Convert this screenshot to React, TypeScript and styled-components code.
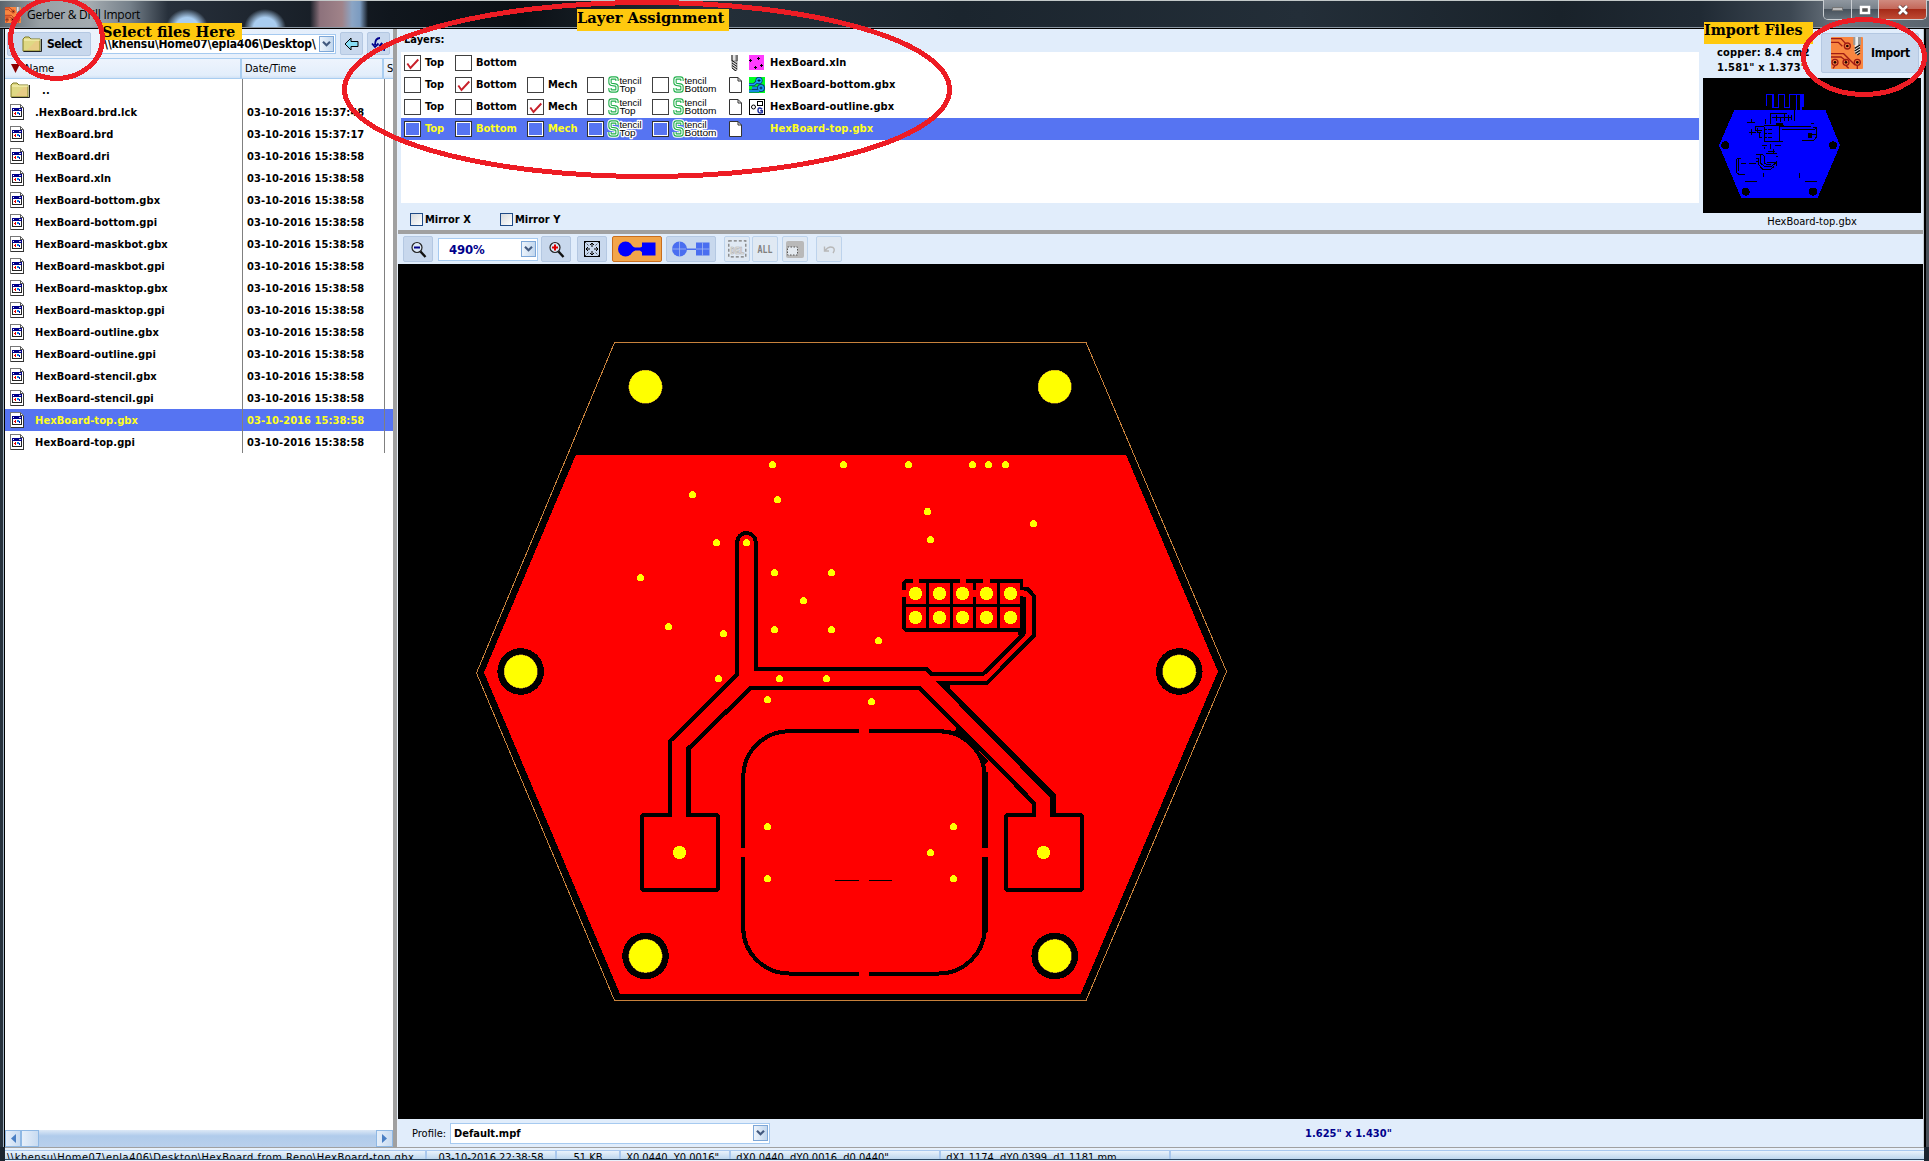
import React from 'react';
import styled, { createGlobalStyle, css } from 'styled-components';

const Global = createGlobalStyle`
  * { box-sizing: border-box; }
  html, body { margin: 0; padding: 0; background: #000; overflow: hidden; }
  svg { display: block; flex: none; }
`;

const ui = css`
  font-family: "DejaVu Sans Condensed", "DejaVu Sans", Tahoma, sans-serif;
  font-stretch: condensed;
  font-size: 11px;
  white-space: nowrap;
`;

/* ---------- window frame ---------- */

const Screen = styled.div`
  ${ui}
  position: relative;
  width: 1929px;
  height: 1161px;
  overflow: hidden;
  display: flex;
  flex-direction: column;
  background: #1b2530;
  color: #000;
`;

const TitleBar = styled.header`
  height: 29px;
  flex: none;
  display: flex;
  align-items: flex-start;
  padding: 6px 2px 0 5px;
  gap: 6px;
  border-top: 1px solid #c3c9c9;
  border-bottom: 1px solid #000;
  box-shadow: inset 0 -1px 0 #8b97a3;
  background:
    radial-gradient(ellipse 21px 19px at 187px 27px, #a9cdf0 55%, transparent 100%),
    radial-gradient(ellipse 21px 19px at 265px 27px, #a9cdf0 55%, transparent 100%),
    linear-gradient(90deg, transparent 310px, #8d727c 320px, #a08389 342px, #8ba5c5 352px, #7b9bc0 360px, transparent 368px),
    linear-gradient(90deg, #5b646c 0, #98a0a5 40px, #a4abb0 90px, #75808a 130px, #27303b 168px, #10161d 390px, #0b1015 520px, #242f39 700px, #1b252e 960px, #232e38 1300px, #19222a 1560px, #202a34 1700px, #3c4752 1790px, #6c7680 1840px, #5a646e 1929px);
`;

const TitleText = styled.span`
  font-family: "Open Sans", "Noto Sans", sans-serif;
  font-stretch: normal;
  font-size: 12px;
  line-height: 15px;
  letter-spacing: -0.25px;
  flex: 1;
`;

const WindowButtons = styled.div`
  display: flex;
  height: 20px;
  width: 104px;
  margin-top: -7px;
  border: 1px solid #c9ced2;
  border-top: 0;
  border-radius: 0 0 5px 5px;
  overflow: hidden;
`;

const WinBtn = styled.div<{ $w: number; $close?: boolean }>`
  width: ${p => p.$w}px;
  display: flex;
  align-items: center;
  justify-content: center;
  border-right: 1px solid #c9ced2;
  background: ${p => p.$close
    ? 'linear-gradient(#d08b80 0, #c4685a 45%, #a52a18 50%, #bf4a33 100%)'
    : 'linear-gradient(#9098a0 0, #79828b 45%, #48525c 50%, #65707a 100%)'};
  &:last-child { border-right: 0; }
`;

const Frame = styled.div`
  flex: none;
  height: 1118px;
  display: flex;
  border-left: 3px solid #27323d;
  border-right: 3px solid #4a525a;
`;

const Client = styled.div`
  flex: 1;
  min-width: 0;
  display: flex;
  border-left: 1px solid #9fb0c0;
  border-right: 2px solid #000;
  box-shadow: inset 1px 0 0 #000, inset -1px 0 0 #c3cad2;
  padding: 0 1px;
`;

/* ---------- file browser ---------- */

const FilePanel = styled.aside`
  width: 388px;
  display: flex;
  flex-direction: column;
  background: #fff;
`;

const PathBar = styled.div`
  height: 29px;
  display: flex;
  align-items: center;
  gap: 4px;
  padding: 0 4px 0 2px;
  background: linear-gradient(90deg, #eef4fc, #e2edfb);
`;

const PushButton = styled.button<{ $w: number; $h: number }>`
  ${ui}
  width: ${p => p.$w}px;
  height: ${p => p.$h}px;
  display: flex;
  align-items: center;
  justify-content: center;
  flex: none;
  padding: 0;
  border: 1px solid #b4c8e2;
  border-radius: 2px;
  background: #c8d8ed;
  font-weight: bold;
`;

const SelectButton = styled(PushButton)`
  justify-content: flex-start;
  gap: 5px;
  padding-left: 14px;
  font-size: 12px;
  letter-spacing: -0.5px;
`;

const Combo = styled.div<{ $w: number; $h: number; $color?: string; $pad?: number }>`
  width: ${p => p.$w}px;
  height: ${p => p.$h}px;
  flex: none;
  display: flex;
  align-items: center;
  justify-content: space-between;
  padding: 0 1px 0 ${p => p.$pad ?? 3}px;
  border: 1px solid #a6caf0;
  background: #fff;
  color: ${p => p.$color ?? '#000'};
  font-weight: bold;
`;

const PathCombo = styled(Combo)`
  margin-left: 7px;
  font-size: 12px;
  letter-spacing: -0.15px;
`;

const ZoomText = styled.span`
  font-size: 13px;
  letter-spacing: -0.1px;
`;

const ArrowBox = styled.span`
  width: 15px;
  height: 16px;
  flex: none;
  display: flex;
  align-items: center;
  justify-content: center;
  border: 1px solid #7da7d8;
  background: linear-gradient(90deg, #edf4fc, #c2d7ee);
`;

const ListHeader = styled.div`
  height: 21px;
  display: grid;
  grid-template-columns: 237px 142px 1fr;
  border-top: 1px solid #a9cdf0;
  border-bottom: 1px solid #a9cdf0;
  background: linear-gradient(#eef4fd 0, #e3eefb 85%, #d2e2f5 100%);
`;

const HeaderCell = styled.div<{ $pad: number }>`
  display: flex;
  align-items: center;
  gap: 5px;
  padding-left: ${p => p.$pad}px;
  border-right: 2px solid #a9cdf0;
  overflow: hidden;
  font-size: 11px;
  &:last-child { border-right: 0; }
`;

const FileRow = styled.div<{ $sel?: boolean }>`
  height: 22px;
  flex: none;
  display: grid;
  grid-template-columns: 238px 142px 1fr;
  font-weight: bold;
  background: ${p => (p.$sel ? '#5674f2' : '#fff')};
  color: ${p => (p.$sel ? '#ffff1e' : '#000')};
`;

const NameCell = styled.div`
  display: flex;
  align-items: center;
  padding-left: 5px;
  border-right: 1px solid #808080;
  letter-spacing: 0.1px;
`;

const IconSlot = styled.span`
  width: 25px;
  flex: none;
`;

const DateCell = styled.div`
  display: flex;
  align-items: center;
  padding-left: 4px;
  border-right: 1px solid #808080;
  letter-spacing: 0.07px;
`;

const Filler = styled.div`
  flex: 1;
`;

const HScroll = styled.div`
  height: 17px;
  display: flex;
  background: linear-gradient(#dce8f6, #b0cbeb 35%, #b9d0ec);
`;

const ScrollPart = styled.div<{ $w: number }>`
  width: ${p => p.$w}px;
  display: flex;
  align-items: center;
  justify-content: center;
  border: 1px solid #8fb8e4;
  background: linear-gradient(90deg, #e6effa, #c8dbf1);
`;

const SplitterV = styled.div`
  width: 5px;
  background: #a0a0a0;
  border-right: 1px solid #e8eff8;
`;

/* ---------- right side ---------- */

const MainPanel = styled.main`
  flex: 1;
  min-width: 0;
  display: flex;
  flex-direction: column;
  background: #e1edfb;
`;

const TopSection = styled.section`
  height: 201px;
  flex: none;
  display: flex;
`;

const LayersArea = styled.div`
  width: 1301px;
  flex: none;
  padding-left: 3px;
  display: flex;
  flex-direction: column;
`;

const LayersTitle = styled.div`
  height: 23px;
  padding: 4px 0 0 3px;
  font-weight: bold;
  line-height: 14px;
`;

const LayerList = styled.div`
  height: 151px;
  background: #fff;
`;

const LayerRow = styled.div<{ $sel?: boolean }>`
  height: 22px;
  display: grid;
  grid-template-columns: 51px 72px 60px 65px 77px 20px 21px 1fr;
  align-items: center;
  padding: 0 0 1px 3px;
  font-weight: bold;
  background: ${p => (p.$sel ? '#5674f2' : '#fff')};
  color: ${p => (p.$sel ? '#ffff1e' : '#000')};
`;

const LayerCell = styled.div`
  display: flex;
  align-items: center;
  gap: 4px;
  line-height: 14px;
`;

const LayerName = styled(LayerCell)`
  letter-spacing: 0.12px;
`;

const Check = styled.span<{ $sel?: boolean }>`
  width: 17px;
  height: 16px;
  flex: none;
  border: 1px solid ${p => (p.$sel ? '#303030' : '#404040')};
  box-shadow: ${p => (p.$sel ? 'inset 0 0 0 1px #fff' : 'none')};
  background: ${p => (p.$sel ? '#5674f2' : '#fff')};
`;

const MirrorRow = styled.div`
  flex: 1;
  display: flex;
  gap: 34px;
  align-items: center;
  padding: 5px 0 0 9px;
  font-weight: bold;
`;

const MirrorItem = styled.label`
  display: flex;
  align-items: center;
  gap: 2px;
  width: 56px;
`;

const MirrorBox = styled.span`
  width: 13px;
  height: 13px;
  flex: none;
  border: 1px solid #1f4a86;
  background: linear-gradient(135deg, #d5d9dd, #fff);
`;

const ImportArea = styled.div`
  flex: 1;
  padding: 4px 2px 0 4px;
`;

const ImportHead = styled.div`
  height: 45px;
  width: 218px;
  display: flex;
  justify-content: space-between;
`;

const BoardInfo = styled.div`
  width: 102px;
  padding: 12px 0 0 14px;
  font-weight: bold;
  line-height: 15px;
  letter-spacing: 0.2px;
`;

const ImportButton = styled(PushButton)`
  justify-content: flex-start;
  gap: 8px;
  padding-left: 9px;
  margin-right: 2px;
  font-size: 12px;
  letter-spacing: -0.35px;
`;

const PreviewCaption = styled.div`
  width: 218px;
  text-align: center;
  line-height: 17px;
`;

const SplitterH = styled.div`
  height: 4px;
  flex: none;
  background: #a0a0a0;
`;

const ToolBar = styled.div`
  height: 30px;
  flex: none;
  display: flex;
  align-items: center;
  padding-left: 5px;
`;

const Tool = styled.button<{ $w: number; $ml?: number; $on?: boolean; $off?: boolean }>`
  width: ${p => p.$w}px;
  height: 26px;
  flex: none;
  display: flex;
  align-items: center;
  justify-content: center;
  margin-left: ${p => p.$ml ?? 0}px;
  padding: 0;
  border-radius: 2px;
  border: 1px solid ${p => (p.$on ? '#c86e1e' : p.$off ? '#bdd3ec' : '#b4c8e2')};
  background: ${p => (p.$on ? '#f2a54a' : p.$off ? '#e0e9f3' : '#c8d8ed')};
`;

const ZoomCombo = styled(Combo)`
  margin-left: 5px;
`;

const Canvas = styled.div`
  height: 855px;
  flex: none;
  background: #000;
`;

const ProfileBar = styled.div`
  height: 28px;
  flex: none;
  display: flex;
  align-items: center;
  padding-left: 14px;
  gap: 5px;
`;

const ProfileLabel = styled.span`
  width: 33px;
`;

const BoardSize = styled.span`
  margin-left: 530px;
  color: #00008b;
  font-weight: bold;
  letter-spacing: 0.05px;
`;

const StatusBar = styled.footer`
  height: 14px;
  flex: none;
  display: flex;
  border-top: 1px solid #a0a0a0;
  margin: 0 5px;
  background: #e8f1fb;
  flex-direction: column;
`;

const StatusCells = styled.div`
  display: flex;
  margin-top: 2px;
  height: 10px;
  border-top: 1px solid #a9c8ee;
  border-bottom: 1px solid #2c4763;
  background: linear-gradient(#eaf3fc, #bed7ee);
  overflow: hidden;
`;

const StatusCell = styled.div<{ $w: number; $center?: boolean; $ls?: number }>`
  width: ${p => p.$w}px;
  flex: none;
  padding: 0 3px 0 ${p => (p.$center ? 3 : 2)}px;
  text-align: ${p => (p.$center ? 'center' : 'left')};
  border-right: 2px solid #a9c8ee;
  line-height: 14px;
  letter-spacing: ${p => p.$ls ?? 0}px;
`;

/* ---------- annotations over the window ---------- */

const Marks = styled.svg`
  position: absolute;
  left: 0;
  top: 0;
  pointer-events: none;
`;

const Note = styled.div<{ $x: number; $y: number; $w: number; $h: number; $size: number }>`
  position: absolute;
  left: ${p => p.$x}px;
  top: ${p => p.$y}px;
  width: ${p => p.$w}px;
  height: ${p => p.$h}px;
  background: #ffc90e;
  font-family: "DejaVu Serif", serif;
  font-stretch: normal;
  font-weight: bold;
  font-size: ${p => p.$size}px;
  line-height: 17px;
`;

/* ---------- icons ---------- */

const PcbIcon = ({ size }: { size: number }) => (
  <svg width={size} height={size} viewBox="0 0 96 96">
    <rect width="96" height="96" rx="3" fill="#f98640" />
    <g fill="none" stroke="#a01c14" strokeWidth="4">
      <path d="M0 5H30L44 20M0 16H22L34 28M0 50H38L72 84M0 60H30L46 72" />
      <circle cx="49" cy="27" r="9" /><circle cx="12" cy="76" r="9" />
      <circle cx="45" cy="76" r="9" /><circle cx="79" cy="76" r="9" />
      <path d="M12 86L6 94M45 86L53 94M79 86V96" />
    </g>
    <g fill="#200"><circle cx="49" cy="27" r="4" /><circle cx="12" cy="76" r="4" /><circle cx="45" cy="76" r="4" /><circle cx="79" cy="76" r="4" /></g>
    <rect x="67" width="23" height="24" fill="#999" /><rect x="73" width="8" height="24" fill="#eee" />
    <path d="M71 24H87V48L79 54L71 46Z" fill="#eee" />
    <path d="M71 34L87 24M71 42L87 32M73 49L87 40M79 54L87 48" stroke="#111" strokeWidth="4" />
  </svg>
);

const FolderIcon = () => (
  <svg width="20" height="16" viewBox="0 0 20 16">
    <path d="M1 3L3 1H7L9 3H18V15H1Z" fill="#dfd884" stroke="#7e7b22" />
    <path d="M2 4H18" stroke="#fbf7c0" />
    <path d="M6 13L14 5H17V14H5Z" fill="#e8c986" opacity=".8" />
    <path d="M1.5 15.5H19.5V3" fill="none" stroke="#222" />
  </svg>
);

const FileIcon = () => (
  <svg width="14" height="16" viewBox="0 0 14 16" shapeRendering="crispEdges">
    <path d="M.5.5H10.5L13.5 3.5V15.5H.5Z" fill="#fff" stroke="#777" />
    <path d="M10.5 1V3.5H13" fill="none" stroke="#555" />
    <path d="M13.5 4V15.5H1" fill="none" stroke="#333" />
    <rect x="2.5" y="4.5" width="9" height="8" fill="#fff" stroke="#222" />
    <rect x="2" y="4" width="10" height="3" fill="#00008b" />
    <rect x="3" y="5" width="1" height="1" fill="#fff" /><rect x="9" y="5" width="2" height="1" fill="#ccc" />
    <rect x="4" y="9" width="1" height="1" fill="#e00" /><rect x="5" y="8" width="1" height="3" fill="#e00" />
    <rect x="7" y="8" width="2" height="2" fill="#0080e0" /><rect x="9" y="9" width="1" height="2" fill="#00a" />
  </svg>
);

const Chevron = () => (
  <svg width="9" height="6" viewBox="0 0 9 6"><path d="M1 .8L4.5 4.3L8 .8" fill="none" stroke="#42597e" strokeWidth="2.2" /></svg>
);

const Tick = () => (
  <svg width="15" height="14" viewBox="0 0 15 14"><path d="M2.3 7.5L5.5 12L13.3 3.5" fill="none" stroke="#c8202a" strokeWidth="1.9" /></svg>
);

const S_CURVE = 'M9 5V3.500Q9 2 7.500 2H3.500Q2 2 2 3.500V6.500Q2 8 3.500 8.300L7.500 9Q9 9.300 9 10.700V13.500Q9 15 7.500 15H3.500Q2 15 2 13.500V12';

const StencilIcon = ({ second, sel }: { second: 'Top' | 'Bottom'; sel?: boolean }) => {
  const w = second === 'Top' ? 35 : 46;
  return (
    <svg width={w} height="18" viewBox={`0 0 ${w} 18`} overflow="visible">
      {sel && <path d={S_CURVE} fill="none" stroke="#fff" strokeWidth="5.400" />}
      <g fontFamily="Liberation Sans, sans-serif" fontSize="9.500" fontWeight="normal" stroke="#fff" strokeWidth={sel ? 2.6 : 0} strokeLinejoin="round" paintOrder="stroke" fill="#000">
        <text x="11.500" y="8" textLength="22" lengthAdjust="spacingAndGlyphs">tencil</text>
        <text x="11.500" y="15.500" textLength={second === 'Top' ? 16 : 32} lengthAdjust="spacingAndGlyphs">{second}</text>
      </g>
      <path d={S_CURVE} fill="none" stroke="#22b04c" strokeWidth="3.400" />
      <path d={S_CURVE} fill="none" stroke="#fff" strokeWidth="1.200" />
    </svg>
  );
};

const DrillIcon = () => (
  <svg width="13" height="16" viewBox="-2 0 13 16">
    <rect width="7" height="6" fill="#777" /><rect x="2" width="2.500" height="6" fill="#e4e4e4" />
    <path d="M1 6H6V15L4.500 16L1 13Z" fill="#ddd" stroke="#333" strokeWidth=".5" />
    <path d="M1 8L6 11.500M1 10.500L6 14M1 13L5 16M1 5.500L6 9" stroke="#111" strokeWidth="1" />
  </svg>
);

const PageIcon = () => (
  <svg width="13" height="16" viewBox="0 0 13 16">
    <path d="M.5.5H9L12.500 4V15.500H.5Z" fill="#fff" stroke="#333" /><path d="M9 .5V4H12.500" fill="none" stroke="#333" />
  </svg>
);

const ExcellonIcon = () => (
  <svg width="15" height="15" viewBox="0 0 15 15" shapeRendering="crispEdges">
    <rect width="15" height="15" fill="#ff3cff" />
    <path d="M1.500 4V7M0 5.500H3M9.500 2V5M8 3.500H11M6.500 11V14M5 12.500H8M12.500 9V12M11 10.500H14" stroke="#000" />
  </svg>
);

const CopperIcon = () => (
  <svg width="16" height="16" viewBox="0 0 16 16">
    <rect width="16" height="16" fill="#00ff22" />
    <g fill="none" stroke="#0a3c78" strokeWidth="3"><path d="M0 7.500H5L9 4M0 14H10M3 11H8" /><circle cx="10" cy="3.500" r="2.200" /><circle cx="12" cy="11" r="2.500" /></g>
    <g fill="#1aa5ff" stroke="#1aa5ff" strokeWidth="1.300"><path d="M0 7.500H5L9 4M0 14H10M3 11H8" fill="none" /><circle cx="10" cy="3.500" r="2.200" /><circle cx="12" cy="11" r="2.300" /></g>
    <path d="M10 2V5M8.500 3.500H11.500M12 9.500V12.500M10.500 11H13.500" stroke="#024" />
  </svg>
);

const OutlineIcon = () => (
  <svg width="16" height="16" viewBox="0 0 16 16">
    <rect x=".5" y=".5" width="15" height="15" fill="#fff" stroke="#000" />
    <circle cx="4.500" cy="8" r="2" fill="none" stroke="#000" /><rect x="8.500" y="2.500" width="5" height="4" fill="none" stroke="#000" />
    <path d="M13.200 10.200Q9 7.500 9 11.200Q9 15 13.200 13.600V11.800H11.200" fill="none" stroke="#1a2a9a" strokeWidth="1.500" />
  </svg>
);

const ZoomIcon = ({ plus }: { plus?: boolean }) => (
  <svg width="17" height="17" viewBox="0 0 17 17">
    <circle cx="7" cy="6.500" r="5" fill="#dce8f6" stroke="#222" strokeWidth="1.200" />
    <path d="M10.500 10.500L15.500 16" stroke="#111" strokeWidth="2.400" />
    <path d={plus ? 'M4 6.500H10M7 3.500V9.500' : 'M4 6.500H10'} stroke={plus ? '#e00000' : '#00008b'} strokeWidth="2" />
  </svg>
);

const FitIcon = () => (
  <svg width="16" height="16" viewBox="0 0 16 16" fill="none" stroke="#000">
    <rect x=".5" y=".5" width="15" height="15" />
    <path d="M8 2V6M8 10V14M2 8H6M10 8H14M6 4L8 2L10 4M6 12L8 14L10 12M4 6L2 8L4 10M12 6L14 8L12 10" strokeWidth="1" />
    <path d="M1 1L5 5M15 1L11 5M1 15L5 11M15 15L11 11" strokeWidth=".7" strokeDasharray="1.500 1" />
  </svg>
);

const PadsIcon = ({ faded }: { faded?: boolean }) => (
  <svg width="38" height="16" viewBox="0 0 38 16">
    <g fill={faded ? '#4a6ef0' : '#0000ff'}>
      <circle cx="7.500" cy="8" r="7.500" /><rect x="24" y="1.500" width="13.500" height="13" />
      <rect x="14" y={faded ? 7.5 : 6.5} width="12" height={faded ? 1.5 : 3} />
      {!faded && <path d="M13 4L17 7V9.500L13 12ZM25 5L22 7V9.500L25 12Z" />}
    </g>
    {faded && <path d="M7.500 0V16M0 8H14M30.500 1.500V14.500M24 8H37.500" stroke="#a3b8f2" strokeWidth=".8" />}
  </svg>
);

const DelIcon = () => (
  <svg width="19" height="18" viewBox="0 0 19 18" overflow="visible">
    <rect x=".8" y=".8" width="17" height="16" fill="none" stroke="#777" strokeWidth="1.200" strokeDasharray="3 2" />
    <text x="2.500" y="14" fontFamily="Liberation Mono, monospace" fontWeight="bold" fontSize="10" textLength="14" lengthAdjust="spacingAndGlyphs" fill="#e8e8e8" stroke="#aaa" strokeWidth=".6">DEL</text>
  </svg>
);

const AllIcon = () => (
  <svg width="18" height="18" viewBox="0 -2 18 18" overflow="visible">
    <text x="1.500" y="11" fontFamily="DejaVu Sans Mono, monospace" fontWeight="bold" fontSize="10.500" textLength="15" lengthAdjust="spacingAndGlyphs" fill="#808080">ALL</text>
  </svg>
);

const AreaIcon = () => (
  <svg width="19" height="17" viewBox="0 0 19 17">
    <rect width="18" height="17" rx="2" fill="#b9b9b9" /><rect x="1.500" y="6" width="10" height="8" fill="#e4eaf0" stroke="#555" strokeDasharray="1.500 1.500" />
  </svg>
);

const UndoIcon = () => (
  <svg width="13" height="9" viewBox="0 0 13 9"><path d="M1.500 1.500V6H6M2 5.500Q6 .5 10 2.500Q12.500 4.500 10 8" fill="none" stroke="#b8b8b8" strokeWidth="1.400" /></svg>
);

const BackIcon = () => (
  <svg width="15" height="14" viewBox="0 0 15 14"><path d="M1 7L7 1V4.500H14V9.500H7V13Z" fill="#86dcf4" stroke="#000" /></svg>
);

const LevelsIcon = () => (
  <svg width="15" height="14" viewBox="0 0 15 14"><path d="M9 1Q4 1 4 8M1 6.500L4 10L7.500 6.500M14 13Q10 13 10.500 8M8 9.500L10.500 6.500L13.500 9.500" fill="none" stroke="#00008b" strokeWidth="1.800" /></svg>
);

/* ---------- board drawings ---------- */

const vias: [number, number][] = [
  [772.5, 464.5], [843.5, 464.5], [908.5, 464.5], [972.5, 464.5], [988.5, 464.5], [1005.5, 464.5],
  [692.5, 494.5], [777.5, 499.5], [716.5, 542.5], [746.5, 542.5], [774.5, 572.5], [831.5, 572.5],
  [640.5, 577.5], [803.5, 600.5], [668.5, 626.5], [723.5, 633.5], [774.5, 629.5], [831.5, 629.5],
  [718.5, 678.5], [779.5, 678.5], [826.5, 678.5], [767.5, 699.5], [927.5, 511.5], [1033.5, 523.5],
  [930.5, 539.5], [878.5, 640.5], [871.5, 701.5], [953.5, 826.5], [767.5, 826.5], [767.5, 878.5],
  [930.5, 852.5], [953.5, 878.5],
];
const pads: [number, number][] = [
  ...[915.5, 939.5, 962.5, 986.5, 1010.5].flatMap(x => [[x, 593.5], [x, 617.5]] as [number, number][]),
  [679.5, 852.5], [1043.5, 852.5],
];
const ringed: [number, number][] = [[520.7, 671.5], [1179.3, 671.5], [645.5, 956], [1054.7, 956]];
const holes: [number, number][] = [...ringed, [645.5, 386.7], [1054.7, 386.7]];

const Board = () => (
  <svg width="1525" height="855" viewBox="398 264 1525 855" shapeRendering="crispEdges">
    <path d="M614.500 342.500H1086L1226.500 671.500L1086 1000.500H614.500L476.500 673Z" fill="none" stroke="#c8823c" />
    <path d="M575.700 455.300H1126.200L1218 671.500L1080.700 994H620L484 672.500Z" fill="#f00" />
    <g fill="none" stroke="#000" strokeWidth="4">
      <path d="M670.200 815V741L737.200 674.500V541.500A9.300 9.500 0 0 1 755.700 541.500V669H926.500L931 673.700H983.500L1024 633.500" />
      <path d="M1022 588.500H1027L1033.500 595.500V636L987 683H944" />
      <path d="M688.500 816V748.500L751 687.700H919.500L1034.200 803.300V816" strokeWidth="4.300" />
      <path d="M672 815H643L641.800 816V889L643 890H716.500L717.800 889V816L716.500 815H686" strokeWidth="3.700" />
      <path d="M1036 815H1007L1006 816V889L1007 890H1081L1082 889V816L1081 815H1050" strokeWidth="3.700" />
      <rect x="743.200" y="731.200" width="241.600" height="242.300" rx="46" />
      <path d="M985 772V932" strokeWidth="5.700" />
      <path d="M835 880.500H859M869 880.500H892" strokeWidth="1" />
    </g>
    <path d="M935.700 681.300H951L950 689L1056 794.500V817H1050V797.500Z" />
    <path d="M937 729L955 731L957 727L988 761L984 765L978 750L966 738L953 733Z" />
    <g fill="#f00">
      <rect x="859" y="727" width="10" height="8" /><rect x="859" y="970" width="10" height="8" />
      <rect x="740" y="848" width="8" height="9.300" /><rect x="981" y="848" width="8" height="9" />
    </g>
    <g transform="translate(840 440) scale(.33333)">
      <path d="M197 423H545V570H197L192 565V428Z" fill="none" stroke="#000" strokeWidth="11" />
      <path d="M262 423V570M334 423V570M403 423V570M475 423V570M192 496H545" stroke="#000" strokeWidth="9" />
      <path d="M549 472V582" stroke="#000" strokeWidth="17" />
      <path d="M533 575H557V582L545 592L533 585Z" />
      <g fill="#f00">
        <rect x="186" y="450" width="12" height="22" /><rect x="219" y="416" width="19" height="13" />
        <rect x="360" y="416" width="18" height="13" /><rect x="429" y="416" width="21" height="13" />
        <rect x="398" y="450" width="11" height="22" /><rect x="539" y="451" width="14" height="17" />
      </g>
    </g>
    {ringed.map(([x, y]) => <circle key={`${x}-${y}`} cx={x} cy={y} r="23.300" />)}
    <g fill="#ff0">
      {holes.map(([x, y]) => <circle key={`${x}-${y}`} cx={x} cy={y} r="16.700" stroke="#b8862c" strokeWidth=".5" />)}
      {pads.map(([x, y]) => <circle key={`${x}-${y}`} cx={x} cy={y} r="6.600" />)}
      {vias.map(([x, y]) => <circle key={`${x}-${y}`} cx={x} cy={y} r="3.500" />)}
    </g>
  </svg>
);

const Preview = () => (
  <svg width="218" height="135" viewBox="429 234 654 405" shapeRendering="crispEdges">
    <rect x="429" y="234" width="654" height="405" />
    <path d="M523 330H796L840 436L773 593H543L477 436Z" fill="#00f" />
    <g fill="none" stroke="#00f" strokeWidth="4">
      <path d="M619 317V284H639V322H656V284H673V322H689V284H732M710 284V330" />
    </g>
    <path d="M720 284H732V322H726V330H720Z" fill="#00f" />
    <g fill="none" stroke="#000" strokeWidth="3">
      <path d="M631 372V341H662M636 353H694M662 341H680M650 345V364M662 353V366M674 342V364M686 346V362M693 346V360M704 330V350M704 350V364" />
      <path d="M562 368H586M575 358V370M617 358V372M640 376H672M648 372H668" strokeWidth="4" />
      <path d="M567 397H588M574 388V406M586 380V390H606M592 385V397H603M598 400V412H607" />
      <path d="M612 380V424H657V376H612M612 388H620M625 388H635M612 400H620M625 400H635M612 412H620M625 412H635" />
      <path d="M586 380H612M612 424H668M657 379H754M665 388H758L770 386V410L762 421H726M744 402H768M754 371H762M760 383H772" />
      <path d="M607 436H622M632 432V446M645 436H662M612 440V446M618 460H650M625 453H645M640 446V460M648 468H655" />
      <path d="M588 464H602V490L612 498H636L648 488M588 474H596V494L608 508H632L642 500M604 462L612 468V488L620 494H634M588 484H596M620 486H648M650 484V498" />
      <path d="M543 474H534L528 480V516L538 524H554M534 478V512M544 490H558M568 490H588M555 544H591M736 544H771M610 520V532M718 518V534" />
    </g>
    <path d="M744 398H756V414H744Z" />
    <circle cx="496" cy="436" r="12" /><circle cx="819" cy="436" r="12" /><circle cx="557" cy="575" r="12" /><circle cx="759" cy="575" r="12" />
  </svg>
);

/* ---------- data ---------- */

const D = '03-10-2016 15:38:58';
const files: [string, string][] = [
  ['.HexBoard.brd.lck', '03-10-2016 15:37:48'], ['HexBoard.brd', '03-10-2016 15:37:17'],
  ['HexBoard.dri', D], ['HexBoard.xln', D], ['HexBoard-bottom.gbx', D], ['HexBoard-bottom.gpi', D],
  ['HexBoard-maskbot.gbx', D], ['HexBoard-maskbot.gpi', D], ['HexBoard-masktop.gbx', D],
  ['HexBoard-masktop.gpi', D], ['HexBoard-outline.gbx', D], ['HexBoard-outline.gpi', D],
  ['HexBoard-stencil.gbx', D], ['HexBoard-stencil.gpi', D], ['HexBoard-top.gbx', D], ['HexBoard-top.gpi', D],
];

type Layer = { name: string; checked: number; drill?: boolean; sel?: boolean; icon?: React.ReactNode };
const layers: Layer[] = [
  { name: 'HexBoard.xln', checked: 0, drill: true, icon: <ExcellonIcon /> },
  { name: 'HexBoard-bottom.gbx', checked: 1, icon: <CopperIcon /> },
  { name: 'HexBoard-outline.gbx', checked: 2, icon: <OutlineIcon /> },
  { name: 'HexBoard-top.gbx', checked: -1, sel: true },
];

const LayerLine = ({ layer }: { layer: Layer }) => {
  const labels: React.ReactNode[] = [
    'Top', 'Bottom', 'Mech',
    <StencilIcon key="t" second="Top" sel={layer.sel} />,
    <StencilIcon key="b" second="Bottom" sel={layer.sel} />,
  ];
  return (
    <LayerRow $sel={layer.sel}>
      {labels.map((label, i) => (
        <LayerCell key={i}>
          {(!layer.drill || i < 2) && (
            <>
              <Check $sel={layer.sel}>{layer.checked === i && <Tick />}</Check>
              {label}
            </>
          )}
        </LayerCell>
      ))}
      <LayerCell>{layer.drill ? <DrillIcon /> : <PageIcon />}</LayerCell>
      <LayerCell>{layer.icon}</LayerCell>
      <LayerName>{layer.name}</LayerName>
    </LayerRow>
  );
};

export default function App() {
  return (
    <Screen>
      <Global />
      <TitleBar>
        <PcbIcon size={16} />
        <TitleText>Gerber &amp; Drill Import</TitleText>
        <WindowButtons>
          <WinBtn $w={28}><svg width="12" height="5"><rect x=".5" y=".5" width="10" height="3" fill="#bbb" stroke="#777" /></svg></WinBtn>
          <WinBtn $w={27}><svg width="12" height="10"><rect x="2" y="2" width="8" height="6" fill="#555" stroke="#fff" strokeWidth="2.500" /></svg></WinBtn>
          <WinBtn $w={47} $close><svg width="12" height="10" viewBox="0 0 12 10"><path d="M2 1L10 9M10 1L2 9" stroke="#533" strokeWidth="4" /><path d="M2 1L10 9M10 1L2 9" stroke="#fff" strokeWidth="2.600" /></svg></WinBtn>
        </WindowButtons>
      </TitleBar>

      <Frame>
        <Client>
          <FilePanel>
            <PathBar>
              <SelectButton $w={84} $h={24}><FolderIcon />Select</SelectButton>
              <PathCombo $w={234} $h={20} $pad={1}><span>\\khensu\Home07\epla406\Desktop\</span><ArrowBox><Chevron /></ArrowBox></PathCombo>
              <PushButton $w={23} $h={23}><BackIcon /></PushButton>
              <PushButton $w={23} $h={23}><LevelsIcon /></PushButton>
            </PathBar>
            <ListHeader>
              <HeaderCell $pad={6}><svg width="9" height="9"><path d="M0 0H9L4.500 9Z" fill="#8b0000" /></svg>Name</HeaderCell>
              <HeaderCell $pad={3}>Date/Time</HeaderCell>
              <HeaderCell $pad={3}>S</HeaderCell>
            </ListHeader>
            <FileRow><NameCell><IconSlot><FolderIcon /></IconSlot>&nbsp; ..</NameCell><DateCell /></FileRow>
            {files.map(([name, date]) => (
              <FileRow key={name} $sel={name === 'HexBoard-top.gbx'}>
                <NameCell><IconSlot><FileIcon /></IconSlot>{name}</NameCell>
                <DateCell>{date}</DateCell>
              </FileRow>
            ))}
            <Filler />
            <HScroll>
              <ScrollPart $w={16}><svg width="5" height="9"><path d="M5 0V9L0 4.500Z" fill="#4a7fc4" /></svg></ScrollPart>
              <ScrollPart $w={18} />
              <Filler />
              <ScrollPart $w={17}><svg width="5" height="9"><path d="M0 0V9L5 4.500Z" fill="#4a7fc4" /></svg></ScrollPart>
            </HScroll>
          </FilePanel>
          <SplitterV />

          <MainPanel>
            <TopSection>
              <LayersArea>
                <LayersTitle>Layers:</LayersTitle>
                <LayerList>{layers.map(l => <LayerLine key={l.name} layer={l} />)}</LayerList>
                <MirrorRow>
                  <MirrorItem><MirrorBox />Mirror X</MirrorItem>
                  <MirrorItem><MirrorBox />Mirror Y</MirrorItem>
                </MirrorRow>
              </LayersArea>
              <ImportArea>
                <ImportHead>
                  <BoardInfo>copper: 8.4 cm2<br />1.581" x 1.373"</BoardInfo>
                  <ImportButton $w={98} $h={40}><PcbIcon size={32} />Import</ImportButton>
                </ImportHead>
                <Preview />
                <PreviewCaption>HexBoard-top.gbx</PreviewCaption>
              </ImportArea>
            </TopSection>
            <SplitterH />
            <ToolBar>
              <Tool $w={30}><ZoomIcon /></Tool>
              <ZoomCombo $w={100} $h={23} $color="#00008b" $pad={10}><ZoomText>490%</ZoomText><ArrowBox><Chevron /></ArrowBox></ZoomCombo>
              <Tool $w={30} $ml={3}><ZoomIcon plus /></Tool>
              <Tool $w={30} $ml={6}><FitIcon /></Tool>
              <Tool $w={50} $ml={5} $on><PadsIcon /></Tool>
              <Tool $w={50} $ml={4}><PadsIcon faded /></Tool>
              <Tool $w={26} $ml={8} $off><DelIcon /></Tool>
              <Tool $w={26} $ml={2} $off><AllIcon /></Tool>
              <Tool $w={26} $ml={4} $off><AreaIcon /></Tool>
              <Tool $w={26} $ml={8} $off><UndoIcon /></Tool>
            </ToolBar>
            <Canvas><Board /></Canvas>
            <ProfileBar>
              <ProfileLabel>Profile:</ProfileLabel>
              <Combo $w={320} $h={21}><span>Default.mpf</span><ArrowBox><Chevron /></ArrowBox></Combo>
              <BoardSize>1.625" x 1.430"</BoardSize>
            </ProfileBar>
          </MainPanel>
        </Client>
      </Frame>

      <StatusBar>
        <StatusCells>
          <StatusCell $w={422} $ls={0.5}>\\khensu\Home07\epla406\Desktop\HexBoard from Repo\HexBoard-top.gbx</StatusCell>
          <StatusCell $w={130} $center>03-10-2016 22:38:58</StatusCell>
          <StatusCell $w={64} $center>51 KB</StatusCell>
          <StatusCell $w={110}>&nbsp;X0.0440, Y0.0016"</StatusCell>
          <StatusCell $w={210}>&nbsp;dX0.0440, dY0.0016, d0.0440"</StatusCell>
          <StatusCell $w={230}>&nbsp;dX1.1174, dY0.0399, d1.1181 mm</StatusCell>
        </StatusCells>
      </StatusBar>

      <Note $x={102} $y={23} $w={140} $h={17} $size={14.5}>Select files Here</Note>
      <Note $x={577} $y={9} $w={152} $h={22} $size={14.7}>Layer Assignment</Note>
      <Note $x={1704} $y={22} $w={109} $h={22} $size={14.3}>Import Files</Note>
      <Marks width="1929" height="200" fill="none" stroke="#ed1c24" strokeWidth="5" shapeRendering="crispEdges">
        <ellipse cx="56.500" cy="38.500" rx="46" ry="40" />
        <ellipse cx="647" cy="89.500" rx="302.500" ry="87" />
        <ellipse cx="1864" cy="57" rx="60.500" ry="37.500" />
      </Marks>
    </Screen>
  );
}
